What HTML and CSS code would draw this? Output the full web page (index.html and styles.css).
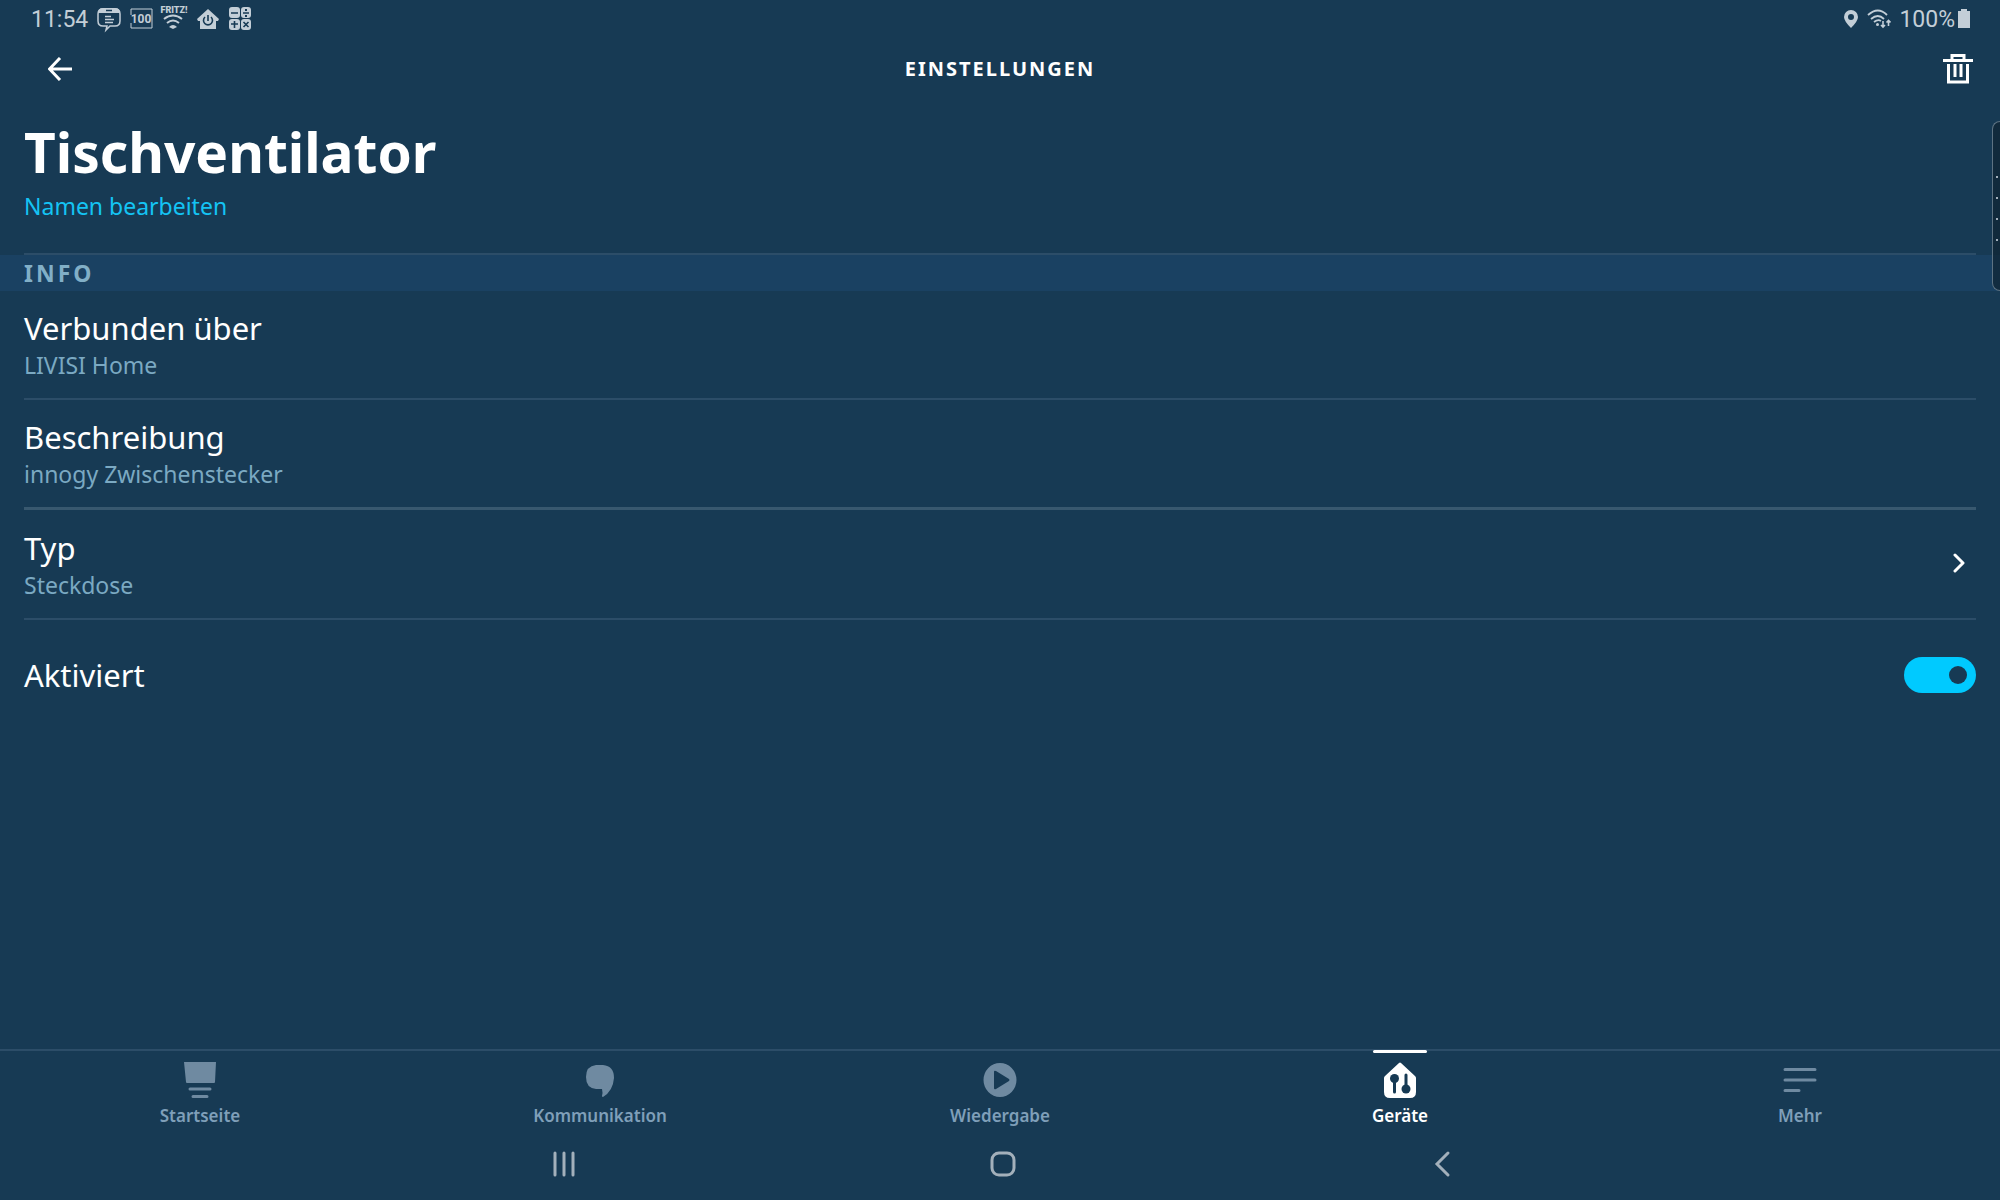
FILE: index.html
```html
<!DOCTYPE html>
<html lang="de">

<head>
    <meta charset="UTF-8">
    <meta name="viewport" content="width=device-width, initial-scale=1.0">
    <title>Einstellungen</title>
    <link rel="stylesheet" href="styles.css">
</head>

<body>

<div class="statusbar">
    <div class="status-left">
        <span class="clock">11:54</span>
        <svg class="status-icon" viewBox="0 0 24 24">
            <path d="M6 2h12q5 0 5 5v7q0 5-5 5h-5l-4 4 1-4H6q-5 0-5-5V7q0-5 5-5z" fill="none" stroke="currentColor" stroke-width="1.5"/>
            <path d="M1 6q0-5 5-5h12q5 0 5 5z" fill="currentColor"/>
            <path d="M9 3.500h6" stroke="#173a54" stroke-width="1.5"/>
            <path d="M8 9.500h6M8 12.500h9M8 15.500h8" stroke="currentColor" stroke-width="1.5"/>
        </svg>
        <svg class="status-icon" viewBox="0 0 24 24">
            <path d="M1 8V2h21v19H1v-5" fill="none" stroke="currentColor" stroke-width="1"/>
            <text class="percent" x="11" y="16" text-anchor="middle">100</text>
        </svg>
        <svg class="status-icon" viewBox="0 0 24 24">
            <text class="fritz" x="11" y="6" text-anchor="middle">FRITZ!</text>
            <path d="M1 12q9-7 18 0M4 16q6-5 12 0" fill="none" stroke="currentColor" stroke-width="2"/>
            <path d="M6 20q4-4 8 0l-4 2z" fill="currentColor"/>
        </svg>
        <svg class="status-icon" viewBox="0 0 24 24">
            <path d="M12 2l11 10-1 2h-2v8H4v-8H2l-1-2z" fill="currentColor"/>
            <path d="M9 10a4.500 4.500 0 1 0 6 0M12 8v6" fill="none" stroke="#173a54" stroke-width="1.600"/>
        </svg>
        <svg class="status-icon" viewBox="0 0 24 24">
            <g fill="currentColor">
                <rect x="0" y="0" width="11" height="11" rx="3"/>
                <rect x="12" y="0" width="10" height="11" rx="3"/>
                <rect x="0" y="12" width="11" height="11" rx="3"/>
                <rect x="12" y="12" width="10" height="11" rx="3"/>
            </g>
            <path d="M2 6h7M14 6h6M2 17h7M5.500 14v7M14.500 15l5 5M19.500 15l-5 5" stroke="#173a54" stroke-width="1.600"/>
            <path d="M16 2h2v2h-2zM16 8h2v2h-2z" fill="#173a54"/>
        </svg>
    </div>
    <div class="status-right">
        <svg class="status-pin" viewBox="0 0 16 20">
            <path d="M8 1a7 7 0 0 1 7 7q0 4-7 11Q1 12 1 8a7 7 0 0 1 7-7zM8 5a3 3 0 1 0 0 6a3 3 0 1 0 0-6z" fill="currentColor" fill-rule="evenodd"/>
        </svg>
        <svg class="status-wifi" viewBox="0 0 24 20">
            <path d="M1 6q10-9 19 0M4 10q7-6 13 0M7 13q4-3 7-1" fill="none" stroke="currentColor" stroke-width="1.800"/>
            <circle cx="10.500" cy="15.500" r="1.500" fill="currentColor"/>
            <path d="M16 12v6M14 16l2 2 2-2M21.500 17v-5.500M19.500 13.500l2-2 2 2" fill="none" stroke="currentColor" stroke-width="1.600"/>
        </svg>
        <span class="battery-text">100%</span>
        <svg class="status-battery" viewBox="0 0 14 20">
            <path d="M4 0h6v2h3v17H1V2h3z" fill="currentColor"/>
        </svg>
    </div>
</div>

<header class="header">
    <button class="icon-button" aria-label="Zurück">
        <svg class="icon-back" viewBox="0 0 24 24">
            <path d="M24 12H2M12 1L1.500 12L12 23" fill="none" stroke="currentColor" stroke-width="3"/>
        </svg>
    </button>
    <h1 class="header-title">Einstellungen</h1>
    <button class="icon-button" aria-label="Löschen">
        <svg class="icon-trash" viewBox="0 0 32 32">
            <path d="M1 7.500h30M10 7V2.500h12V7" fill="none" stroke="currentColor" stroke-width="3"/>
            <path d="M6.500 11v18h19V11M13 11v13M19 11v13" fill="none" stroke="currentColor" stroke-width="3"/>
        </svg>
    </button>
</header>

<main class="content">
    <div class="device">
        <h2 class="device-name">Tischventilator</h2>
        <a class="device-edit" href="#">Namen bearbeiten</a>
    </div>

    <h3 class="section-title">Info</h3>

    <div class="row">
        <div class="row-title">Verbunden über</div>
        <div class="row-text">LIVISI Home</div>
    </div>
    <div class="row row-strong">
        <div class="row-title">Beschreibung</div>
        <div class="row-text">innogy Zwischenstecker</div>
    </div>
    <a class="row row-link" href="#">
        <div>
            <div class="row-title">Typ</div>
            <div class="row-text">Steckdose</div>
        </div>
        <svg class="icon-chevron" viewBox="0 0 12 20">
            <path d="M2 2l8 8-8 8" fill="none" stroke="currentColor" stroke-width="3" stroke-linecap="round" stroke-linejoin="round"/>
        </svg>
    </a>
    <div class="row-toggle">
        <label class="row-title" for="aktiviert">Aktiviert</label>
        <input class="toggle" type="checkbox" role="switch" id="aktiviert" checked>
    </div>
</main>

<nav class="tabbar">
    <a class="tab" href="#">
        <svg class="tab-icon" viewBox="0 0 36 36">
            <path d="M2 0h32l-1 20q0 1-1 1H5q-1 0-1-1z" fill="currentColor"/>
            <path d="M8 27h20M11 34.500h14" stroke="currentColor" stroke-width="3" stroke-linecap="round"/>
        </svg>
        Startseite
    </a>
    <a class="tab" href="#">
        <svg class="tab-icon" viewBox="0 0 36 36">
            <path d="M14 3h7Q32 4 32 16Q31 29 21 35q-1 0-1-1q1-3 0-7h-6Q4 26 4 15T14 3z" fill="currentColor"/>
        </svg>
        Kommunikation
    </a>
    <a class="tab" href="#">
        <svg class="tab-icon" viewBox="0 0 36 36">
            <path d="M18 1a16.500 17 0 1 0 0 34a16.500 17 0 1 0 0-34zM12 10q0-2 2-1l13 8q1 1 0 2l-13 8q-2 1-2-1z" fill="currentColor" fill-rule="evenodd"/>
        </svg>
        Wiedergabe
    </a>
    <a class="tab active" href="#">
        <svg class="tab-icon" viewBox="0 0 36 36">
            <path d="M17 1q1-1 2 0l14 13q1 1 1 2v14q0 6-6 6H8q-6 0-6-6V16q0-1 1-2z" fill="currentColor"/>
            <circle cx="12.500" cy="16.500" r="4.500" fill="#173a54"/>
            <circle cx="24" cy="27" r="4.500" fill="#173a54"/>
            <path d="M12.500 17v13M24 27V13" stroke="#173a54" stroke-width="3" stroke-linecap="round"/>
        </svg>
        Geräte
    </a>
    <a class="tab" href="#">
        <svg class="tab-icon" viewBox="0 0 36 36">
            <path d="M3 7.500h30M3 18h30M3 28.500h14" stroke="currentColor" stroke-width="3" stroke-linecap="round"/>
        </svg>
        Mehr
    </a>
</nav>

<div class="sysnav">
    <button class="sys-button" aria-label="Letzte Apps">
        <svg class="sys-icon" viewBox="0 0 28 28">
            <path d="M5 3v22M14 3v22M23 3v22" stroke="currentColor" stroke-width="3" stroke-linecap="round"/>
        </svg>
    </button>
    <button class="sys-button" aria-label="Home">
        <svg class="sys-icon" viewBox="0 0 28 28">
            <rect x="3" y="3" width="22" height="22" rx="7" fill="none" stroke="currentColor" stroke-width="3"/>
        </svg>
    </button>
    <button class="sys-button" aria-label="Zurück">
        <svg class="sys-icon" viewBox="0 0 28 28">
            <path d="M20 3L9 14l11 11" fill="none" stroke="currentColor" stroke-width="3" stroke-linecap="round"/>
        </svg>
    </button>
</div>

<!-- Griff der Seitenleiste am rechten Rand -->
<div class="edge-panel">
    <span class="edge-dot"></span>
    <span class="edge-dot"></span>
    <span class="edge-dot"></span>
    <span class="edge-dot"></span>
</div>

</body>

</html>
```

FILE: styles.css
```css
* {
    box-sizing: border-box;
}

body {
    font-family: "Noto Sans", "Open Sans", sans-serif;
    background-color: #173a54;
    color: white;
    margin: 0;
    min-height: 100vh;
    display: flex;
    flex-direction: column;
    position: relative;
    overflow-x: hidden;
}

h1, h2, h3 {
    margin: 0;
}

a {
    color: inherit;
    text-decoration: none;
}

button {
    background: none;
    border: none;
    padding: 0;
    color: inherit;
    cursor: pointer;
}

svg {
    display: block;
}

/* Statusleiste */
.statusbar {
    display: flex;
    justify-content: space-between;
    align-items: center;
    height: 38px;
    padding: 0 29px 0 31px;
    font-family: Roboto, sans-serif;
    font-size: 23px;
    color: #c3ced7;
}

.status-left {
    display: flex;
    align-items: center;
    gap: 9px;
}

.status-right {
    display: flex;
    align-items: center;
    gap: 8px;
}

.status-icon {
    width: 24px;
    height: 24px;
    overflow: visible;
}

.percent {
    font-size: 12px;
    font-weight: bold;
    fill: currentColor;
}

.fritz {
    font-size: 9px;
    font-weight: 900;
    fill: currentColor;
}

.status-pin {
    width: 16px;
    height: 20px;
}

.status-wifi {
    width: 24px;
    height: 20px;
}

.status-battery {
    width: 14px;
    height: 20px;
    margin-left: -6px;
}

/* Kopfzeile */
.header {
    display: grid;
    grid-template-columns: 1fr auto 1fr;
    align-items: center;
    height: 62px;
    padding: 0 26px;
}

.icon-button {
    width: 32px;
    height: 32px;
    margin-left: 18px;
    display: flex;
    justify-content: center;
    align-items: center;
}

.icon-button:last-child {
    margin-left: auto;
}

.icon-back {
    width: 24px;
    height: 24px;
}

.icon-trash {
    width: 32px;
    height: 32px;
}

.header-title {
    font-size: 20px;
    font-weight: 700;
    line-height: 26px;
    letter-spacing: 2px;
    text-transform: uppercase;
}

/* Inhalt */
.content {
    flex: 1;
}

.device {
    margin: 0 24px;
    padding: 15px 0 29px;
    border-bottom: 2px solid #2c4d68;
}

.device-name {
    font-size: 55px;
    line-height: 74px;
}

.device-edit {
    display: block;
    width: max-content;
    font-size: 23px;
    line-height: 35px;
    color: #14c4f4;
}

.section-title {
    padding: 0 24px;
    background-color: #1a4162;
    color: #81afc7;
    font-size: 23px;
    font-weight: 700;
    line-height: 36px;
    letter-spacing: 3px;
    text-transform: uppercase;
}

.row {
    display: block;
    margin: 0 24px;
    padding: 15px 0 18px;
    border-bottom: 2px solid #2c4d68;
}

.row-strong {
    border-bottom: 3px solid #38586f;
}

.row-link {
    display: flex;
    justify-content: space-between;
    align-items: center;
    padding: 16px 11px 18px 0;
}

.row-title {
    font-size: 31px;
    line-height: 44px;
}

.row-text {
    font-size: 23px;
    line-height: 30px;
    color: #7ba9c2;
}

.icon-chevron {
    width: 12px;
    height: 20px;
}

.row-toggle {
    display: flex;
    justify-content: space-between;
    align-items: center;
    margin: 0 24px;
    height: 110px;
}

.toggle {
    appearance: none;
    width: 72px;
    height: 36px;
    margin: 0;
    padding: 9px;
    border-radius: 18px;
    background-color: #6c879e;
    display: flex;
    cursor: pointer;
}

.toggle::before {
    content: "";
    width: 18px;
    height: 18px;
    border-radius: 50%;
    background-color: #173a54;
}

.toggle:checked {
    background-color: #00caff;
    justify-content: flex-end;
}

/* Untere Navigation */
.tabbar {
    display: grid;
    grid-template-columns: repeat(5, 1fr);
    border-top: 2px solid #2c4d68;
}

.tab {
    display: flex;
    flex-direction: column;
    align-items: center;
    gap: 6px;
    padding: 11px 0 0;
    font-size: 17px;
    font-weight: 600;
    line-height: 24px;
    color: #7f9fb9;
    position: relative;
}

.tab-icon {
    width: 36px;
    height: 36px;
    color: #6f8aa1;
}

.active,
.active .tab-icon {
    color: white;
}

.active::before {
    content: "";
    position: absolute;
    top: -1px;
    width: 54px;
    height: 3px;
    border-radius: 2px;
    background-color: white;
}

/* Android-Navigation */
.sysnav {
    display: grid;
    grid-template-columns: repeat(3, 22%);
    justify-content: center;
    height: 72px;
    padding-left: 6px;
    color: #a3b0bb;
}

.sys-button {
    display: flex;
    justify-content: center;
    align-items: center;
}

.sys-icon {
    width: 28px;
    height: 28px;
}

.edge-panel {
    position: absolute;
    top: 121px;
    right: 0;
    width: 8px;
    height: 170px;
    padding-top: 5px;
    border: 1px solid #5d7282;
    border-right: none;
    border-radius: 8px 0 0 8px;
    background-color: rgba(15, 35, 50, 0.7);
    display: flex;
    flex-direction: column;
    justify-content: center;
    align-items: center;
    gap: 19px;
}

.edge-dot {
    width: 2px;
    height: 2px;
    background-color: #a3b0bb;
}
```
